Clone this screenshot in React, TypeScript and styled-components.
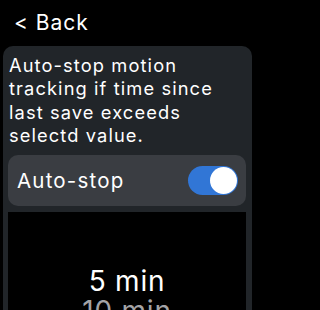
import styled, { createGlobalStyle } from "styled-components";

const GlobalStyle = createGlobalStyle`
  html, body {
    margin: 0;
    padding: 0;
    background: #000;
    font-family: "Inter", "Liberation Sans", sans-serif;
    color: #fff;
    -webkit-font-smoothing: antialiased;
  }
`;

const Screen = styled.div`
  width: 255px;
  height: 310px;
  overflow: hidden;
  background: #000;
  display: flex;
  flex-direction: column;
`;

const Header = styled.div`
  flex-shrink: 0;
  height: 46px;
  display: flex;
  align-items: center;
  padding-left: 14px;
  box-sizing: border-box;
  font-size: 21px;
  letter-spacing: 1px;
  color: #fff;
  padding-bottom: 2px;
`;

const Card = styled.div`
  margin: 0 3px;
  flex: 1;
  min-height: 0;
  background: #212529;
  border-radius: 10px 10px 0 0;
  padding: 8px 6px 0 5px;
  display: flex;
  flex-direction: column;
`;

const Description = styled.p`
  flex-shrink: 0;
  margin: 0 0 0 1px;
  font-size: 18.3px;
  line-height: 23.3px;
  letter-spacing: 1.1px;
  color: #fff;
`;

const ToggleRow = styled.div`
  flex-shrink: 0;
  margin-top: 8px;
  height: 51px;
  border-radius: 10px;
  background: #3a3d42;
  display: flex;
  align-items: center;
  justify-content: space-between;
  padding: 0 8px 0 9px;
  font-size: 20.5px;
  letter-spacing: 1.2px;
`;

const Switch = styled.div<{ $on: boolean }>`
  width: 50px;
  height: 29px;
  border-radius: 15px;
  background: ${(p) => (p.$on ? "#3176d6" : "#555")};
  display: flex;
  align-items: center;
  justify-content: ${(p) => (p.$on ? "flex-end" : "flex-start")};
  padding: 0 1px;
  box-sizing: border-box;
`;

const Knob = styled.div`
  width: 27px;
  height: 27px;
  border-radius: 50%;
  background: #fff;
`;

const Picker = styled.div`
  margin-top: 6px;
  flex: 1;
  min-height: 0;
  overflow: hidden;
  background: #000;
  display: flex;
  flex-direction: column;
  align-items: center;
  padding-top: 54px;
`;

const Option = styled.div<{ $selected?: boolean }>`
  flex-shrink: 0;
  font-size: 28px;
  line-height: 30px;
  letter-spacing: 0.8px;
  color: ${(p) => (p.$selected ? "#fff" : "#a3a3a6")};
`;

export default function App() {
  return (
    <Screen>
      <GlobalStyle />
      <Header>&lt; Back</Header>
      <Card>
        <Description>
          Auto-stop motion tracking if time since last save exceeds selectd
          value.
        </Description>
        <ToggleRow>
          <span>Auto-stop</span>
          <Switch $on>
            <Knob />
          </Switch>
        </ToggleRow>
        <Picker>
          <Option $selected>5 min</Option>
          <Option>10 min</Option>
        </Picker>
      </Card>
    </Screen>
  );
}
